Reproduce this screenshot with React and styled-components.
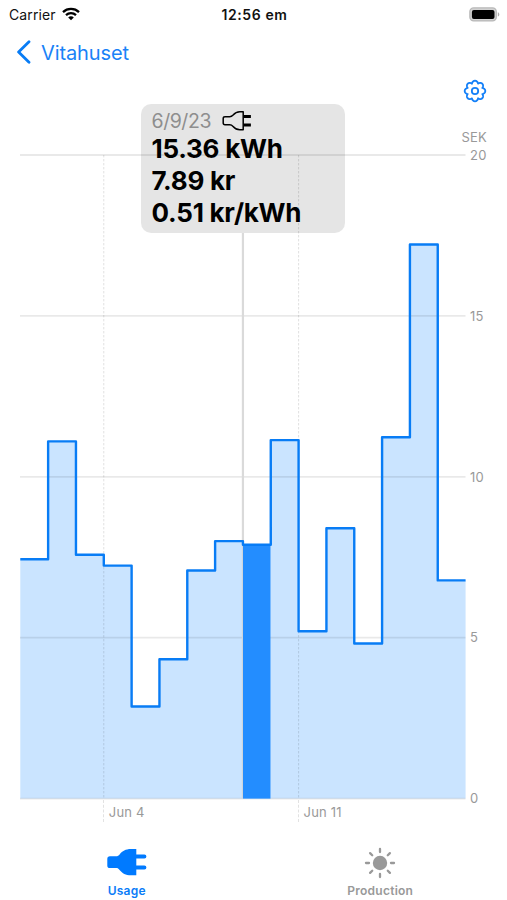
import React from 'react'
import styled, { createGlobalStyle } from 'styled-components'

const days = [7.44, 11.1, 7.58, 7.24, 2.86, 4.33, 7.09, 8.0, 7.89, 11.14, 5.2, 8.4, 4.82, 11.23, 17.22, 6.78]
const selected = 8
const weeks = [
  { day: 3, label: 'Jun 4' },
  { day: 10, label: 'Jun 11' },
]

const LEFT = 20.3
const STEP = 27.83
const TOP = 1
const UNIT = 32.18
const BOTTOM = TOP + UNIT * 20
const CALLOUT_END = 79

const yOf = (value) => BOTTOM - value * UNIT
const xOf = (day) => LEFT + day * STEP

const outline = days
  .map((value, i) => `${i === 0 ? 'M' : 'L'}${xOf(i)} ${yOf(value)}H${xOf(i + 1)}`)
  .join('')

function Plot() {
  return (
    <PlotSvg width="467" height="646" viewBox="0 0 467 646">
      <path d={`${outline}V${BOTTOM}H${LEFT}Z`} fill="#cae4ff" />
      {[0, 5, 10, 15, 20].map((tick) => (
        <line key={tick} x1="20" x2="465.5" y1={yOf(tick)} y2={yOf(tick)} stroke="#000" strokeOpacity=".085" strokeWidth="1.8" />
      ))}
      {weeks.map(({ day }) => (
        <line key={day} x1={xOf(day)} x2={xOf(day)} y1={TOP} y2={BOTTOM} stroke="#000" strokeOpacity=".12" strokeWidth="1" strokeDasharray="2.4 1.6" />
      ))}
      <path d={`M${xOf(selected)} ${CALLOUT_END}V${BOTTOM}`} stroke="#dadada" strokeWidth="2.2" />
      <rect x={xOf(selected)} y={yOf(days[selected])} width={STEP - 0.3} height={BOTTOM - yOf(days[selected])} fill="#238dff" />
      <path d={outline} fill="none" stroke="#087cf5" strokeWidth="2.4" strokeLinejoin="round" />
    </PlotSvg>
  )
}

const PlugOutline = () => (
  <svg width="30" height="22" viewBox="0 0 30 22" fill="none" stroke="#000" strokeWidth="1.5" strokeLinejoin="round">
    <path d="M21.2 1.8H17.8C14.5 1.8 12.8 3.1 11.1 5.1C9.9 6.4 9.2 6.8 7.7 6.8H3C1.8 6.8 1.2 7.4 1.2 8.5V13.1C1.2 14.2 1.8 14.8 3 14.8H7.7C9.2 14.8 9.9 15.2 11.1 16.5C12.8 18.5 14.5 19.8 17.8 19.8H21.2Z" />
    <path d="M21.5 6.5H28.9M21.5 15H28.9" strokeWidth="2.8" />
  </svg>
)

const PlugFilled = () => (
  <svg width="40" height="28" viewBox="0 0 40 28">
    <path d="M29.3 1H24C18.5 1 15.4 3.1 12.8 6.2C11.5 7.7 10.7 8.2 9 8.2H3C1.2 8.2.3 9.2.3 11V17.4C.3 19.2 1.2 20.1 3 20.1H9C10.7 20.1 11.5 20.7 12.8 22.2C15.4 25.2 18.5 27.2 24 27.2H29.3Z" fill="#007aff" />
    <path d="M29 8.6H37.4M29 19.5H37.4" stroke="#007aff" strokeWidth="4" strokeLinecap="round" />
  </svg>
)

const Sun = () => (
  <svg width="32" height="32" viewBox="0 0 32 32">
    <circle cx="16" cy="16" r="7.2" fill="#999" />
    {[0, 45, 90, 135, 180, 225, 270, 315].map((angle) => (
      <path key={angle} d="M16 2V5" transform={`rotate(${angle} 16 16)`} stroke="#999" strokeWidth="2.3" strokeLinecap="round" />
    ))}
  </svg>
)

// eight round lobes with shallow notches between them
const gearPath = Array.from({ length: 128 }, (_, i) => {
  const angle = (i / 128) * Math.PI * 2
  const radius = 7.9 + 2.4 * Math.pow(Math.abs(Math.cos(angle * 4)), 0.8)
  return `${i === 0 ? 'M' : 'L'}${(12 + radius * Math.sin(angle)).toFixed(2)} ${(12 - radius * Math.cos(angle)).toFixed(2)}`
}).join('')

const Gear = () => (
  <svg width="24" height="24" viewBox="0 0 24 24" fill="none" stroke="#1480f8" strokeWidth="1.8" strokeLinejoin="round">
    <path d={`${gearPath}Z`} />
    <circle cx="12" cy="12" r="3.2" />
  </svg>
)

const Wifi = () => (
  <svg width="18" height="14" viewBox="0 0 18 14" fill="none" stroke="#000" strokeWidth="2.3">
    <path d="M1 5.1C5.5.9 12.5.9 17 5.1M4 8.1C6.8 5.5 11.2 5.5 14 8.1" />
    <path d="M6.2 10.4C7.8 9 10.2 9 11.8 10.4L9 13.3Z" fill="#000" stroke="none" />
  </svg>
)

const Battery = () => (
  <svg width="31" height="15" viewBox="0 0 31 15">
    <rect x=".9" y=".9" width="26.4" height="13" rx="3.8" fill="#d2d2d2" stroke="#b8b8b8" strokeWidth="1.4" />
    <rect x="2.9" y="2.9" width="22.6" height="9" rx="2" fill="#000" />
    <path d="M28.8 5.2C30.8 5.9 30.8 8.9 28.8 9.6Z" fill="#aaa" />
  </svg>
)

export default function App() {
  return (
    <Screen>
      <GlobalStyle />
      <StatusBar>
        <Carrier>Carrier <Wifi /></Carrier>
        <Clock>12:56 em</Clock>
        <BatterySlot><Battery /></BatterySlot>
      </StatusBar>
      <NavBar>
        <svg width="15" height="24" viewBox="0 0 15 24" fill="none" stroke="#087cf5" strokeWidth="2.8" strokeLinecap="round" strokeLinejoin="round">
          <path d="M13 1.8L2.6 12L13 22.2" />
        </svg>
        <BackLabel>Vitahuset</BackLabel>
      </NavBar>
      <Toolbar><Gear /></Toolbar>
      <Unit>SEK</Unit>
      <Chart>
        <Plot />
        <Axis>
          {[20, 15, 10, 5, 0].map((tick) => <Tick key={tick}>{tick}</Tick>)}
        </Axis>
        <Callout>
          <CalloutDate>6/9/23 <PlugOutline /></CalloutDate>
          <Reading>15.36 kWh</Reading>
          <Reading>7.89 kr</Reading>
          <Reading>0.51 kr/kWh</Reading>
        </Callout>
      </Chart>
      <Dates>
        {weeks.map(({ day, label }) => <DateLabel key={day}>{label}</DateLabel>)}
      </Dates>
      <TabBar>
        <Tab $active>
          <PlugFilled />
          <TabLabel>Usage</TabLabel>
        </Tab>
        <Tab>
          <Sun />
          <TabLabel>Production</TabLabel>
        </Tab>
      </TabBar>
    </Screen>
  )
}

const GlobalStyle = createGlobalStyle`
  * { box-sizing: border-box; }
  body { margin: 0; background: #fff; }
  svg { display: block; flex: none; }
`

const Screen = styled.div`
  width: 507px;
  height: 900px;
  display: flex;
  flex-direction: column;
  overflow: hidden;
  font-family: Inter, "Liberation Sans", sans-serif;
  background: #fff;
`

const StatusBar = styled.header`
  height: 28px;
  display: grid;
  grid-template-columns: 1fr auto 1fr;
  align-items: center;
  padding: 0 7px 0 9px;
  font-size: 14px;
  color: #111;
`

const Carrier = styled.div`
  display: flex;
  align-items: center;
  gap: 6px;
  letter-spacing: 0.1px;
`

const Clock = styled.div`
  font-weight: 600;
  letter-spacing: 0.6px;
`

const BatterySlot = styled.div`
  display: flex;
  justify-content: flex-end;
`

const NavBar = styled.nav`
  height: 48px;
  display: flex;
  align-items: center;
  gap: 10px;
  padding-left: 16px;
`

const BackLabel = styled.span`
  padding-top: 1px;
  font-size: 20px;
  letter-spacing: -0.1px;
  color: #1a82f7;
`

const Toolbar = styled.div`
  height: 53px;
  display: flex;
  justify-content: flex-end;
  padding: 3px 20.5px 0 0;
`

const Unit = styled.div`
  height: 25px;
  padding-right: 20px;
  text-align: right;
  font-size: 13px;
  line-height: 16px;
  letter-spacing: 0.2px;
  color: #999;
`

const Chart = styled.main`
  position: relative;
  height: 646px;
  display: flex;
`

const PlotSvg = styled.svg`
  width: 467px;
`

const Axis = styled.div`
  margin-top: -7px;
  padding-left: 3px;
`

const Tick = styled.div`
  height: 160.8px;
  font-size: 13px;
  line-height: 16px;
  letter-spacing: 0.3px;
  color: #999;
`

// hangs over the plot above the selected day
const Callout = styled.section`
  position: absolute;
  left: 141px;
  top: -50px;
  width: 203.5px;
  height: 129px;
  padding: 5px 10.5px;
  border-radius: 10px;
  background: rgba(0, 0, 0, 0.1);
`

const CalloutDate = styled.div`
  height: 24px;
  display: flex;
  align-items: center;
  gap: 11px;
  font-size: 19.5px;
  letter-spacing: -0.45px;
  color: #8e8e8e;
`

const Reading = styled.div`
  height: 32px;
  font-size: 26px;
  font-weight: 700;
  line-height: 32px;
  letter-spacing: -0.25px;
  color: #000;
`

const Dates = styled.div`
  height: 22px;
  display: grid;
  grid-template-columns: 194.8px 1fr;
  padding-left: 103.3px;
`

const DateLabel = styled.div`
  padding: 4px 0 0 4.5px;
  border-left: 1px dashed #e2e2e2;
  font-size: 13px;
  line-height: 16px;
  letter-spacing: 0.2px;
  color: #999;
`

const TabBar = styled.footer`
  flex: 1;
  display: grid;
  grid-template-columns: 1fr 1fr;
  padding-top: 21px;
`

const Tab = styled.div`
  display: flex;
  flex-direction: column;
  align-items: center;
  justify-content: space-between;
  padding: ${({ $active }) => ($active ? '5px 0 0' : '4px 0 0')};
  color: ${({ $active }) => ($active ? '#0a7cf8' : '#999')};
`

const TabLabel = styled.span`
  height: 17px;
  font-size: 12px;
  font-weight: 600;
  line-height: 16px;
  letter-spacing: 0.25px;
`
